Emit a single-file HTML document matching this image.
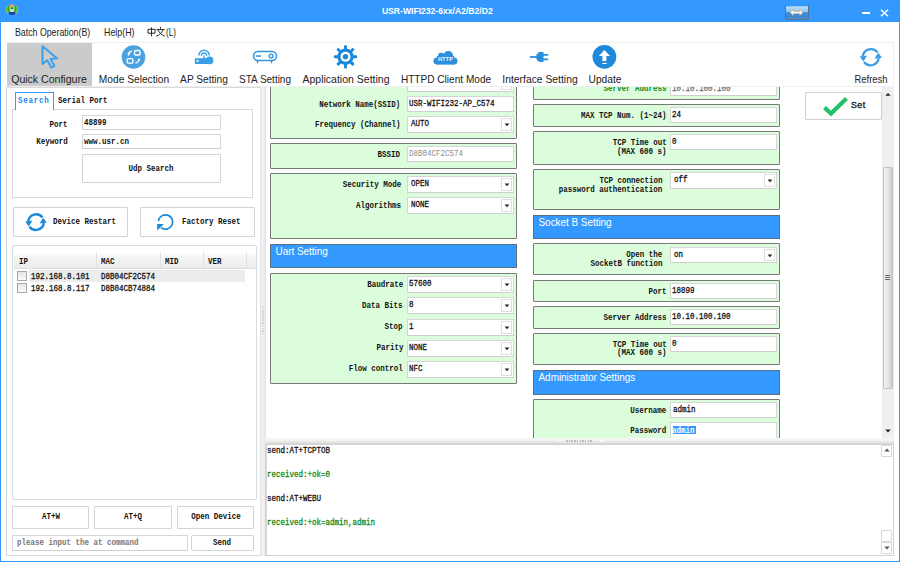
<!DOCTYPE html><html><head><meta charset="utf-8"><title>USR-WIFI232</title><style>
*{margin:0;padding:0;box-sizing:border-box}
html,body{width:900px;height:562px;overflow:hidden;background:#fff}
.a{position:absolute}
.T{position:absolute;white-space:pre}
.s{font-family:"Liberation Mono",monospace;font-size:9px;line-height:10px;color:#111;font-weight:bold;transform:scaleX(.8333)}
.r{font-weight:normal}
.v{font-weight:normal;-webkit-text-stroke:.3px currentColor}
.sb{font-family:"Liberation Mono",monospace;font-size:9px;line-height:10px;color:#111;font-weight:bold;transform:scaleX(.8333)}

.t{font-family:"Liberation Sans",sans-serif;font-size:10.3px;line-height:12px;color:#222}
.m{font-family:"Liberation Sans",sans-serif;font-size:10.2px;line-height:12px;color:#222}
.h{font-family:"Liberation Sans",sans-serif;font-size:10px;line-height:12px;color:#fff;letter-spacing:-.05px}
.ti{font-family:"Liberation Sans",sans-serif;font-size:8.6px;line-height:12px;color:#fff;font-weight:bold}
.set{font-family:"Liberation Sans",sans-serif;font-size:8.8px;line-height:12px;color:#1a1a1a;letter-spacing:.5px;-webkit-text-stroke:.35px #1a1a1a}
.grp{position:absolute;background:#dcfddc;border:1px solid #787878;border-radius:1px}
.inp{position:absolute;background:#fff;border:1px solid #d6d6d6;border-bottom-color:#cfcfcf}
.btn{position:absolute;background:#fff;border:1px solid #d4d4d4;border-radius:1px}
.hdr{position:absolute;background:#3399ff;border:1px solid #5a7088}
.arr{position:absolute;background:#fff;border:1px solid #dedede}
</style></head><body>
<div class="grp" style="left:270px;top:60px;width:247px;height:79px"></div>
<div class="inp" style="left:407px;top:72px;width:107px;height:20px"></div>
<div class="arr" style="left:501px;top:74px;width:11px;height:16px"></div>
<svg class="a" style="left:503.5px;top:80.5px" width="6" height="4"><path d="M0.6 0.6H5.4L3 3.2Z" fill="#222"/></svg>
<div class="T s" style="right:499.5px;top:100px;transform-origin:right;">Network Name(SSID)</div>
<div class="inp" style="left:407px;top:96px;width:107px;height:16px"></div>
<div class="T s v" style="left:408.5px;top:99px;transform-origin:left;">USR-WIFI232-AP_C574</div>
<div class="T s" style="right:499.5px;top:120px;transform-origin:right;">Frequency (Channel)</div>
<div class="inp" style="left:407px;top:116px;width:107px;height:17px"></div>
<div class="arr" style="left:501px;top:118px;width:11px;height:13px"></div>
<svg class="a" style="left:503.5px;top:123.0px" width="6" height="4"><path d="M0.6 0.6H5.4L3 3.2Z" fill="#222"/></svg>
<div class="T s v" style="left:410.7px;top:119px;transform-origin:left;">AUTO</div>
<div class="grp" style="left:270px;top:143px;width:247px;height:26px"></div>
<div class="T s" style="right:499.5px;top:150px;transform-origin:right;">BSSID</div>
<div class="inp" style="left:407px;top:146px;width:107px;height:16px"></div>
<div class="T s r" style="left:408.5px;top:149px;transform-origin:left;color:#8c8c8c">D8B04CF2C574</div>
<div class="grp" style="left:270px;top:173px;width:247px;height:66px"></div>
<div class="T s" style="right:498.5px;top:180px;transform-origin:right;">Security Mode</div>
<div class="inp" style="left:407px;top:176px;width:107px;height:17px"></div>
<div class="arr" style="left:501px;top:178px;width:11px;height:13px"></div>
<svg class="a" style="left:503.5px;top:183.0px" width="6" height="4"><path d="M0.6 0.6H5.4L3 3.2Z" fill="#222"/></svg>
<div class="T s v" style="left:410.7px;top:179px;transform-origin:left;">OPEN</div>
<div class="T s" style="right:498.5px;top:201px;transform-origin:right;">Algorithms</div>
<div class="inp" style="left:407px;top:197px;width:107px;height:17px"></div>
<div class="arr" style="left:501px;top:199px;width:11px;height:13px"></div>
<svg class="a" style="left:503.5px;top:204.0px" width="6" height="4"><path d="M0.6 0.6H5.4L3 3.2Z" fill="#222"/></svg>
<div class="T s v" style="left:410.7px;top:200px;transform-origin:left;">NONE</div>
<div class="hdr" style="left:270px;top:244px;width:247px;height:24px"></div>
<div class="T h" style="left:275.5px;top:246px;transform-origin:left;">Uart Setting</div>
<div class="grp" style="left:270px;top:273px;width:247px;height:111px"></div>
<div class="T s" style="right:497.0px;top:280px;transform-origin:right;">Baudrate</div>
<div class="inp" style="left:407px;top:276px;width:107px;height:17px"></div>
<div class="arr" style="left:501px;top:278px;width:11px;height:13px"></div>
<svg class="a" style="left:503.5px;top:283.0px" width="6" height="4"><path d="M0.6 0.6H5.4L3 3.2Z" fill="#222"/></svg>
<div class="T s v" style="left:408.5px;top:279px;transform-origin:left;">57600</div>
<div class="T s" style="right:497.0px;top:301px;transform-origin:right;">Data Bits</div>
<div class="inp" style="left:407px;top:297px;width:107px;height:17px"></div>
<div class="arr" style="left:501px;top:299px;width:11px;height:13px"></div>
<svg class="a" style="left:503.5px;top:304.0px" width="6" height="4"><path d="M0.6 0.6H5.4L3 3.2Z" fill="#222"/></svg>
<div class="T s v" style="left:408.5px;top:300px;transform-origin:left;">8</div>
<div class="T s" style="right:497.0px;top:322px;transform-origin:right;">Stop</div>
<div class="inp" style="left:407px;top:319px;width:107px;height:17px"></div>
<div class="arr" style="left:501px;top:321px;width:11px;height:13px"></div>
<svg class="a" style="left:503.5px;top:326.0px" width="6" height="4"><path d="M0.6 0.6H5.4L3 3.2Z" fill="#222"/></svg>
<div class="T s v" style="left:408.5px;top:322px;transform-origin:left;">1</div>
<div class="T s" style="right:497.0px;top:343px;transform-origin:right;">Parity</div>
<div class="inp" style="left:407px;top:340px;width:107px;height:17px"></div>
<div class="arr" style="left:501px;top:342px;width:11px;height:13px"></div>
<svg class="a" style="left:503.5px;top:347.0px" width="6" height="4"><path d="M0.6 0.6H5.4L3 3.2Z" fill="#222"/></svg>
<div class="T s v" style="left:408.5px;top:343px;transform-origin:left;">NONE</div>
<div class="T s" style="right:497.0px;top:364px;transform-origin:right;">Flow control</div>
<div class="inp" style="left:407px;top:361px;width:107px;height:17px"></div>
<div class="arr" style="left:501px;top:363px;width:11px;height:13px"></div>
<svg class="a" style="left:503.5px;top:368.0px" width="6" height="4"><path d="M0.6 0.6H5.4L3 3.2Z" fill="#222"/></svg>
<div class="T s v" style="left:408.5px;top:364px;transform-origin:left;">NFC</div>
<div class="grp" style="left:533px;top:60px;width:247px;height:40px"></div>
<div class="T s" style="right:233.5px;top:84px;transform-origin:right;color:#168a16">Server Address</div>
<div class="inp" style="left:670px;top:80px;width:107px;height:16px"></div>
<div class="T s v" style="left:671.5px;top:84px;transform-origin:left;color:#707070">10.10.100.100</div>
<div class="grp" style="left:533px;top:104px;width:247px;height:23px"></div>
<div class="T s" style="right:233.5px;top:111px;transform-origin:right;">MAX TCP Num. (1~24)</div>
<div class="inp" style="left:670px;top:107px;width:107px;height:16px"></div>
<div class="T s v" style="left:671.5px;top:110px;transform-origin:left;">24</div>
<div class="grp" style="left:533px;top:131px;width:247px;height:34px"></div>
<div class="T s" style="right:233.5px;top:138px;transform-origin:right;">TCP Time out</div>
<div class="T s" style="right:233.5px;top:147px;transform-origin:right;">(MAX 600 s)</div>
<div class="inp" style="left:670px;top:134px;width:107px;height:16px"></div>
<div class="T s v" style="left:671.5px;top:137px;transform-origin:left;">0</div>
<div class="grp" style="left:533px;top:169px;width:247px;height:41px"></div>
<div class="T s" style="right:237.5px;top:176px;transform-origin:right;">TCP connection</div>
<div class="T s" style="right:237.5px;top:185px;transform-origin:right;">password authentication</div>
<div class="inp" style="left:670px;top:172px;width:107px;height:17px"></div>
<div class="arr" style="left:764px;top:174px;width:11px;height:13px"></div>
<svg class="a" style="left:766.5px;top:179.0px" width="6" height="4"><path d="M0.6 0.6H5.4L3 3.2Z" fill="#222"/></svg>
<div class="T s v" style="left:674.0px;top:175px;transform-origin:left;">off</div>
<div class="hdr" style="left:533px;top:215px;width:247px;height:24px"></div>
<div class="T h" style="left:538.5px;top:217px;transform-origin:left;">Socket B Setting</div>
<div class="grp" style="left:533px;top:243px;width:247px;height:32px"></div>
<div class="T s" style="right:237.5px;top:250px;transform-origin:right;">Open the</div>
<div class="T s" style="right:237.5px;top:259px;transform-origin:right;">SocketB function</div>
<div class="inp" style="left:670px;top:247px;width:107px;height:16px"></div>
<div class="arr" style="left:764px;top:249px;width:11px;height:12px"></div>
<svg class="a" style="left:766.5px;top:253.5px" width="6" height="4"><path d="M0.6 0.6H5.4L3 3.2Z" fill="#222"/></svg>
<div class="T s v" style="left:674.0px;top:250px;transform-origin:left;">on</div>
<div class="grp" style="left:533px;top:280px;width:247px;height:22px"></div>
<div class="T s" style="right:233.5px;top:287px;transform-origin:right;">Port</div>
<div class="inp" style="left:670px;top:283px;width:107px;height:16px"></div>
<div class="T s v" style="left:671.5px;top:286px;transform-origin:left;">18899</div>
<div class="grp" style="left:533px;top:306px;width:247px;height:23px"></div>
<div class="T s" style="right:233.5px;top:313px;transform-origin:right;">Server Address</div>
<div class="inp" style="left:670px;top:309px;width:107px;height:16px"></div>
<div class="T s v" style="left:671.5px;top:312px;transform-origin:left;">10.10.100.100</div>
<div class="grp" style="left:533px;top:333px;width:247px;height:32px"></div>
<div class="T s" style="right:233.5px;top:340px;transform-origin:right;">TCP Time out</div>
<div class="T s" style="right:233.5px;top:348px;transform-origin:right;">(MAX 600 s)</div>
<div class="inp" style="left:670px;top:336px;width:107px;height:16px"></div>
<div class="T s v" style="left:671.5px;top:339px;transform-origin:left;">0</div>
<div class="hdr" style="left:533px;top:370px;width:247px;height:25px"></div>
<div class="T h" style="left:538.5px;top:372px;transform-origin:left;">Administrator Settings</div>
<div class="grp" style="left:533px;top:399px;width:247px;height:72px"></div>
<div class="T s" style="right:233.5px;top:406px;transform-origin:right;">Username</div>
<div class="inp" style="left:670px;top:402px;width:107px;height:16px"></div>
<div class="T s v" style="left:673.0px;top:405px;transform-origin:left;">admin</div>
<div class="T s" style="right:233.5px;top:426px;transform-origin:right;">Password</div>
<div class="inp" style="left:670px;top:422px;width:107px;height:24px"></div>
<div class="a" style="left:672.5px;top:425.5px;width:23.5px;height:8.0px;background:#3399ff"></div>
<div class="T s" style="left:672px;top:426px;transform-origin:left;color:#fff">admin</div>
<div class="btn" style="left:805px;top:91.5px;width:77px;height:28px;border-color:#d0d0d0"></div>
<svg class="a" style="left:822px;top:96px" width="27" height="21"><path d="M2.5 11.5L9 17.5L24.5 2.5" stroke="#21c16b" stroke-width="4.2" fill="none" stroke-linecap="butt"/></svg>
<div class="T set" style="left:851px;top:99px;transform-origin:left;">Set</div>
<div class="a" style="left:882px;top:87px;width:12px;height:350.5px;background:#efefef"></div>
<svg class="a" style="left:885px;top:92px" width="6" height="5"><path d="M0.3 3.8H5.7L3 1Z" fill="#222"/></svg>
<div class="a" style="left:882.5px;top:166.5px;width:10.5px;height:222.5px;background:linear-gradient(90deg,#f2f2f2,#e4e4e4 55%,#cdcdcd);border:1px solid #c2c2c2;border-radius:1px"></div>
<svg class="a" style="left:884px;top:273px" width="8" height="9"><path d="M1 2.5H6M1 4.5H6M1 6.5H6" stroke="#6a6a70" stroke-width="1"/></svg>
<svg class="a" style="left:885px;top:429px" width="6" height="4"><path d="M0.3 0.5H5.7L3 3.5Z" fill="#222"/></svg>
<div class="a" style="left:0px;top:0px;width:900px;height:22px;background:#3399ff"></div>
<svg class="a" style="left:5px;top:3px" width="14" height="14" viewBox="5 3 14 14">
<ellipse cx="8.3" cy="9.5" rx="2.3" ry="3.8" fill="#9ccc3a"/><ellipse cx="15.7" cy="9.5" rx="2.3" ry="3.8" fill="#9ccc3a"/>
<ellipse cx="8.8" cy="9.3" rx="1.5" ry="3.3" fill="#22a832"/><ellipse cx="15.2" cy="9.3" rx="1.5" ry="3.3" fill="#22a832"/>
<ellipse cx="12" cy="9" rx="2.6" ry="4" fill="#b8d8a8"/><circle cx="12" cy="5.8" r="1.7" fill="#f5a040"/>
<circle cx="12" cy="8.2" r="1.3" fill="#1c9a2c"/><circle cx="12" cy="10.3" r="1.1" fill="#f4e8e0"/>
<path d="M8.8 12H15.2L14.8 14.8H9.2Z" fill="#1840a8"/></svg>
<div class="T ti" style="left:237.3px;width:400px;text-align:center;top:5px;"><span>USR-WIFI232-6xx/A2/B2/D2</span></div>
<div class="a" style="left:785px;top:5px;width:23.5px;height:15px;border:1px solid #50759c;border-top:none;border-radius:0 0 3px 3px;background:linear-gradient(#3399ff 0,#3399ff 8%,#c2def8 12%,#8ec2f0 50%,#3f8fe0 54%,#3a86d6 85%,#6a8fb5)"></div>
<svg class="a" style="left:789px;top:8px" width="15" height="9"><path d="M1 4.5L4.2 1.5V3.3H10.8V1.5L14 4.5L10.8 7.5V5.7H4.2V7.5Z" fill="#fffaf0" stroke="#b9a27a" stroke-width=".6"/></svg>
<div class="a" style="left:862px;top:12px;width:7.5px;height:1.5px;background:#fff"></div>
<svg class="a" style="left:880px;top:9px" width="9" height="8"><path d="M1 0.8L8 7.2M8 0.8L1 7.2" stroke="#fff" stroke-width="1.5"/></svg>
<div class="T m" style="left:14.7px;top:27px;transform-origin:left;transform:scaleX(.862)">Batch Operation(B)</div>
<div class="T m" style="left:103.7px;top:27px;transform-origin:left;transform:scaleX(.868)">Help(H)</div>
<svg class="a" style="left:146px;top:26px" width="20" height="11" viewBox="146 26 20 11" fill="none" stroke="#2a2a2a" stroke-width="1">
<path d="M148 29.3H155V33.2H148Z M151.5 27.3V36.3"/><path d="M160.5 27V28.8 M156.3 29.6H164.7 M158 30C159.5 33 161.5 35 164.8 36.2 M163 30C161.5 33 159.5 35 156.2 36.2"/></svg>
<div class="T m" style="left:165.8px;top:27px;transform-origin:left;transform:scaleX(.8)">(L)</div>
<div class="a" style="left:7px;top:42px;width:887px;height:45px;border:1px solid #efefef;background:#fff"></div>
<div class="a" style="left:7px;top:43px;width:85px;height:43px;background:#cbcbcb"></div>
<svg class="a" style="left:40px;top:44px" width="20" height="26" viewBox="40 44 20 26"><path d="M42.5 46.2V64L47.3 60.3L51.2 67.6L54.4 65.9L50.6 59.1L57 58.2Z" fill="none" stroke="#3ba0ea" stroke-width="2" stroke-linejoin="round"/></svg>
<svg class="a" style="left:121px;top:45px" width="25" height="25" viewBox="121 45 25 25"><circle cx="133.5" cy="57" r="11.8" fill="#4aa2e0"/>
<rect x="134.5" y="50.5" width="5.5" height="4.5" rx="1.2" fill="none" stroke="#fff" stroke-width="1.4"/>
<rect x="127.3" y="58.6" width="5.5" height="4.5" rx="1.2" fill="none" stroke="#fff" stroke-width="1.4"/>
<path d="M131.8 51.2A4 4 0 0 0 128.5 54.5" stroke="#fff" stroke-width="1.3" fill="none"/><path d="M127.2 53.6L128.6 56L130 53.6Z" fill="#fff"/>
<path d="M135.5 63A4 4 0 0 0 139 59.5" stroke="#fff" stroke-width="1.3" fill="none"/><path d="M137.6 60.4L139 58L140.4 60.4Z" fill="#fff"/></svg>
<svg class="a" style="left:193px;top:47px" width="22" height="19" viewBox="193 47 22 19">
<path d="M198.8 55.5A5.3 5.3 0 0 1 209.4 55.5" stroke="#3a9ee6" stroke-width="1.5" fill="none"/>
<path d="M201.3 55.8A2.8 2.8 0 0 1 206.9 55.8" stroke="#3a9ee6" stroke-width="1.4" fill="none"/>
<rect x="203.4" y="55.5" width="1.4" height="3.5" fill="#3a9ee6"/>
<path d="M195.8 58.3H209.8V63.9H195.8A1 1 0 0 1 194.8 62.9V59.3A1 1 0 0 1 195.8 58.3Z" fill="#3a9ee6"/>
<circle cx="209.6" cy="60.4" r="3.8" fill="#3a9ee6"/>
<rect x="196.6" y="60.2" width="2.1" height="1.6" fill="#fff"/></svg>
<svg class="a" style="left:252px;top:50px" width="26" height="14" viewBox="252 50 26 14">
<rect x="253.5" y="51.5" width="23" height="9" rx="4.5" fill="none" stroke="#2e96e0" stroke-width="1.5"/>
<rect x="256" y="55.3" width="5" height="1.5" fill="#2e96e0"/><circle cx="271" cy="56" r="1.9" fill="none" stroke="#2e96e0" stroke-width="1.4"/>
<path d="M257.5 60.5V63.2M271.5 60.5V63.2" stroke="#2e96e0" stroke-width="1.4"/></svg>
<svg class="a" style="left:332px;top:44px" width="27" height="27" viewBox="332 44 27 27"><rect x="344.05" y="45.199999999999996" width="2.9" height="5" rx=".9" fill="#1c88d8" transform="rotate(0 345.5 56.8)"/><rect x="344.05" y="45.199999999999996" width="2.9" height="5" rx=".9" fill="#1c88d8" transform="rotate(45 345.5 56.8)"/><rect x="344.05" y="45.199999999999996" width="2.9" height="5" rx=".9" fill="#1c88d8" transform="rotate(90 345.5 56.8)"/><rect x="344.05" y="45.199999999999996" width="2.9" height="5" rx=".9" fill="#1c88d8" transform="rotate(135 345.5 56.8)"/><rect x="344.05" y="45.199999999999996" width="2.9" height="5" rx=".9" fill="#1c88d8" transform="rotate(180 345.5 56.8)"/><rect x="344.05" y="45.199999999999996" width="2.9" height="5" rx=".9" fill="#1c88d8" transform="rotate(225 345.5 56.8)"/><rect x="344.05" y="45.199999999999996" width="2.9" height="5" rx=".9" fill="#1c88d8" transform="rotate(270 345.5 56.8)"/><rect x="344.05" y="45.199999999999996" width="2.9" height="5" rx=".9" fill="#1c88d8" transform="rotate(315 345.5 56.8)"/>
<circle cx="345.5" cy="56.8" r="8.2" fill="#1c88d8"/><circle cx="345.5" cy="56.8" r="5" fill="#fff"/><circle cx="345.5" cy="56.8" r="2.7" fill="#1c88d8"/></svg>
<svg class="a" style="left:432px;top:49px" width="27" height="17" viewBox="432 49 27 17"><g fill="#2d8fdc">
<circle cx="437" cy="61" r="3.6"/><circle cx="441.3" cy="56" r="3.3"/><circle cx="448.3" cy="56" r="4.9"/><circle cx="453.9" cy="61" r="3.6"/>
<rect x="437" y="56" width="17" height="8.6"/></g>
<text x="445.6" y="61.3" text-anchor="middle" font-family="Liberation Sans" font-size="5" font-weight="bold" letter-spacing=".4" fill="#fff">HTTP</text></svg>
<svg class="a" style="left:529px;top:50px" width="21" height="14" viewBox="529 50 21 14">
<path d="M530 57H536" stroke="#2a90dc" stroke-width="1.8"/>
<path d="M536 57A5 5 0 0 1 541.5 51.9H543.5V62H541.5A5 5 0 0 1 536 57Z" fill="#2a90dc"/>
<path d="M543 54.9H548.2M543 59.4H548.2" stroke="#2a90dc" stroke-width="1.6"/></svg>
<svg class="a" style="left:591px;top:44px" width="27" height="27" viewBox="591 44 27 27"><circle cx="604.4" cy="56.8" r="11.9" fill="#1e8ad9"/>
<path d="M604.4 50L598.8 56H602.4V61H606.4V56H610Z" fill="#fff"/><rect x="602.3" y="62.9" width="4.4" height="1.1" fill="#fff"/></svg>
<svg class="a" style="left:856px;top:44px" width="30" height="27" viewBox="856 44 30 27"><g id="rh">
<path d="M877.6 52.4A8.3 8.3 0 0 0 862.8 56.2" stroke="#3a9ee6" stroke-width="2.3" fill="none"/>
<path d="M859.6 56.6L867.2 55.6L863.4 61.6Z" fill="#3a9ee6"/></g>
<g transform="rotate(180 870.8 57.2)"><path d="M877.6 52.4A8.3 8.3 0 0 0 862.8 56.2" stroke="#3a9ee6" stroke-width="2.3" fill="none"/>
<path d="M859.6 56.6L867.2 55.6L863.4 61.6Z" fill="#3a9ee6"/></g></svg>
<div class="T t" style="left:-150.6px;width:400px;text-align:center;top:74px;transform:scaleX(1.024)">Quick Configure</div>
<div class="T t" style="left:-66.15px;width:400px;text-align:center;top:74px;transform:scaleX(0.990)">Mode Selection</div>
<div class="T t" style="left:3.9000000000000057px;width:400px;text-align:center;top:74px;transform:scaleX(0.986)">AP Setting</div>
<div class="T t" style="left:65.39999999999998px;width:400px;text-align:center;top:74px;transform:scaleX(0.969)">STA Setting</div>
<div class="T t" style="left:145.5px;width:400px;text-align:center;top:74px;transform:scaleX(1.020)">Application Setting</div>
<div class="T t" style="left:245.89999999999998px;width:400px;text-align:center;top:74px;transform:scaleX(0.979)">HTTPD Client Mode</div>
<div class="T t" style="left:339.70000000000005px;width:400px;text-align:center;top:74px;transform:scaleX(1.005)">Interface Setting</div>
<div class="T t" style="left:404.5px;width:400px;text-align:center;top:74px;transform:scaleX(0.993)">Update</div>
<div class="T t" style="left:671.1500000000001px;width:400px;text-align:center;top:74px;transform:scaleX(0.912)">Refresh</div>
<div class="a" style="left:6px;top:87px;width:255.5px;height:469px;border:1px solid #d9d9d9"></div>
<div class="a" style="left:260px;top:87px;width:6px;height:469px;background:linear-gradient(90deg,#e2e2e2,#f3f3f3 40%,#eeeeee 70%,#dedede)"></div>
<div class="a" style="left:261.5px;top:306px;width:2.5px;height:28px;background:repeating-linear-gradient(#d2d2d2 0 1.5px,transparent 1.5px 2.7px)"></div>
<div class="a" style="left:12.3px;top:108.5px;width:241.2px;height:89.0px;border:1px solid #d9d9d9;background:#fff"></div>
<div class="a" style="left:15px;top:91.5px;width:38.5px;height:18.0px;border:1px solid #3399ff;border-bottom:none;background:#fff"></div>
<div class="T sb" style="left:18px;top:96px;transform-origin:left;color:#1f86f5;letter-spacing:.9px">Search</div>
<div class="T sb" style="left:58px;top:96px;transform-origin:left;">Serial Port</div>
<div class="T sb" style="right:832.7px;top:120px;transform-origin:right;">Port</div>
<div class="T sb" style="right:832.7px;top:137px;transform-origin:right;">Keyword</div>
<div class="inp" style="left:82px;top:115px;width:138.5px;height:15px"></div>
<div class="T s" style="left:83.5px;top:118px;transform-origin:left;color:#111">48899</div>
<div class="inp" style="left:82px;top:134px;width:138.5px;height:15px"></div>
<div class="T s" style="left:83.5px;top:137px;transform-origin:left;color:#111">www.usr.cn</div>
<div class="btn" style="left:82px;top:154px;width:138.5px;height:28.5px"></div>
<div class="T sb" style="left:-48.80000000000001px;width:400px;text-align:center;top:164px;"><span>Udp Search</span></div>
<div class="btn" style="left:13px;top:207px;width:114.5px;height:30px"></div>
<svg class="a" style="left:22px;top:208px" width="28" height="28" viewBox="22 208 28 28">
<path d="M42.5 217.5A8 8 0 0 0 28.2 221.2" stroke="#1a8ad8" stroke-width="2.4" fill="none"/><path d="M25.2 221.6L32.4 220.6L28.8 226.4Z" fill="#1a8ad8"/>
<g transform="rotate(180 36 222.1)"><path d="M42.5 217.5A8 8 0 0 0 28.2 221.2" stroke="#1a8ad8" stroke-width="2.4" fill="none"/><path d="M25.2 221.6L32.4 220.6L28.8 226.4Z" fill="#1a8ad8"/></g></svg>
<div class="T sb" style="left:53px;top:217px;transform-origin:left;">Device Restart</div>
<div class="btn" style="left:140px;top:207px;width:115px;height:30px"></div>
<svg class="a" style="left:155px;top:212px" width="20" height="20" viewBox="155 212 20 20">
<path d="M158.4 221A7.2 7.2 0 1 1 161 227.6" stroke="#1a8ad8" stroke-width="1.7" fill="none"/><path d="M157.2 224H163.9L157.2 230.6Z" fill="#1a8ad8"/></svg>
<div class="T sb" style="left:182px;top:217px;transform-origin:left;">Factory Reset</div>
<div class="a" style="left:12px;top:245px;width:244.5px;height:254.5px;border:1px solid #d3dde6;border-radius:2px;background:#fff"></div>
<div class="a" style="left:13.5px;top:252px;width:242.0px;height:16.5px;background:linear-gradient(#ffffff,#f3f3f3 40%,#ececec);border-bottom:1px solid #dedede"></div>
<div class="a" style="left:96.4px;top:252px;width:1.0px;height:16px;background:#e2e2e2"></div>
<div class="a" style="left:160.2px;top:252px;width:1.0px;height:16px;background:#e2e2e2"></div>
<div class="a" style="left:203px;top:252px;width:1px;height:16px;background:#e2e2e2"></div>
<div class="a" style="left:245.7px;top:252px;width:1.0px;height:16px;background:#e2e2e2"></div>
<div class="T sb" style="left:18.5px;top:257px;transform-origin:left;">IP</div>
<div class="T sb" style="left:101px;top:257px;transform-origin:left;">MAC</div>
<div class="T sb" style="left:164.7px;top:257px;transform-origin:left;">MID</div>
<div class="T sb" style="left:207.8px;top:257px;transform-origin:left;">VER</div>
<div class="a" style="left:29px;top:270px;width:216px;height:11.5px;background:#ececec"></div>
<div class="a" style="left:17px;top:271px;width:10px;height:9.5px;border:1px solid #a8a8a8;background:linear-gradient(#e6e6e6,#fafafa)"></div>
<div class="a" style="left:17px;top:283px;width:10px;height:9.5px;border:1px solid #a8a8a8;background:linear-gradient(#e6e6e6,#fafafa)"></div>
<div class="T s v" style="left:31px;top:272px;transform-origin:left;">192.168.8.101</div>
<div class="T s v" style="left:101px;top:272px;transform-origin:left;">D8B04CF2C574</div>
<div class="T s v" style="left:31px;top:284px;transform-origin:left;">192.168.8.117</div>
<div class="T s v" style="left:101px;top:284px;transform-origin:left;">D8B04CB74884</div>
<div class="btn" style="left:12.2px;top:505.5px;width:76.8px;height:23px"></div>
<div class="T sb" style="left:-149.4px;width:400px;text-align:center;top:512px;"><span>AT+W</span></div>
<div class="btn" style="left:94.4px;top:505.5px;width:77.19999999999999px;height:23px"></div>
<div class="T sb" style="left:-67.0px;width:400px;text-align:center;top:512px;"><span>AT+Q</span></div>
<div class="btn" style="left:177px;top:505.5px;width:77px;height:23px"></div>
<div class="T sb" style="left:15.5px;width:400px;text-align:center;top:512px;"><span>Open Device</span></div>
<div class="inp" style="left:12.2px;top:535px;width:175.8px;height:15.5px"></div>
<div class="T s" style="left:16.5px;top:538px;transform-origin:left;color:#777">please input the at command</div>
<div class="btn" style="left:190.5px;top:534.5px;width:63px;height:16.5px;border-radius:2px"></div>
<div class="T sb" style="left:22px;width:400px;text-align:center;top:538px;"><span>Send</span></div>
<div class="a" style="left:265px;top:438px;width:629px;height:6px;background:linear-gradient(#fafafa,#f0f0f0 45%,#e2e2e2 75%,#d4d4d4)"></div>
<div class="a" style="left:566px;top:439.5px;width:27px;height:2.5px;background:repeating-linear-gradient(90deg,#bdbdbd 0 1.5px,transparent 1.5px 2.7px)"></div>
<div class="a" style="left:557.5px;top:440px;width:1.5px;height:1.5px;background:#fff"></div>
<div class="a" style="left:601px;top:440px;width:1.5px;height:1.5px;background:#fff"></div>
<div class="a" style="left:265px;top:443.5px;width:629px;height:112.5px;border:1px solid #d2d2d2;border-left:2px solid #d6d6d6;background:#fff"></div>
<div class="T s v" style="left:266.5px;top:446px;transform-origin:left;">send:AT+TCPTOB</div>
<div class="T s v" style="left:266.5px;top:470px;transform-origin:left;color:#168a16">received:+ok=0</div>
<div class="T s v" style="left:266.5px;top:494px;transform-origin:left;">send:AT+WEBU</div>
<div class="T s v" style="left:266.5px;top:518px;transform-origin:left;color:#168a16">received:+ok=admin,admin</div>
<div class="btn" style="left:881px;top:444.5px;width:11px;height:12px;border-color:#d8d8d8"></div>
<svg class="a" style="left:883.5px;top:448px" width="6" height="4"><path d="M0.3 3.5H5.7L3 0.5Z" fill="#555"/></svg>
<div class="btn" style="left:881px;top:529.5px;width:11px;height:12px;border-color:#d8d8d8"></div>
<div class="btn" style="left:881px;top:541.5px;width:11px;height:12.5px;border-color:#d8d8d8"></div>
<svg class="a" style="left:883.5px;top:545.5px" width="6" height="4"><path d="M0.3 0.5H5.7L3 3.5Z" fill="#555"/></svg>
<div class="a" style="left:0px;top:22px;width:1px;height:540px;background:#3399ff"></div>
<div class="a" style="left:899px;top:22px;width:1px;height:540px;background:#3399ff"></div>
<div class="a" style="left:0px;top:560.5px;width:900px;height:1.5px;background:#3399ff"></div>
</body></html>
